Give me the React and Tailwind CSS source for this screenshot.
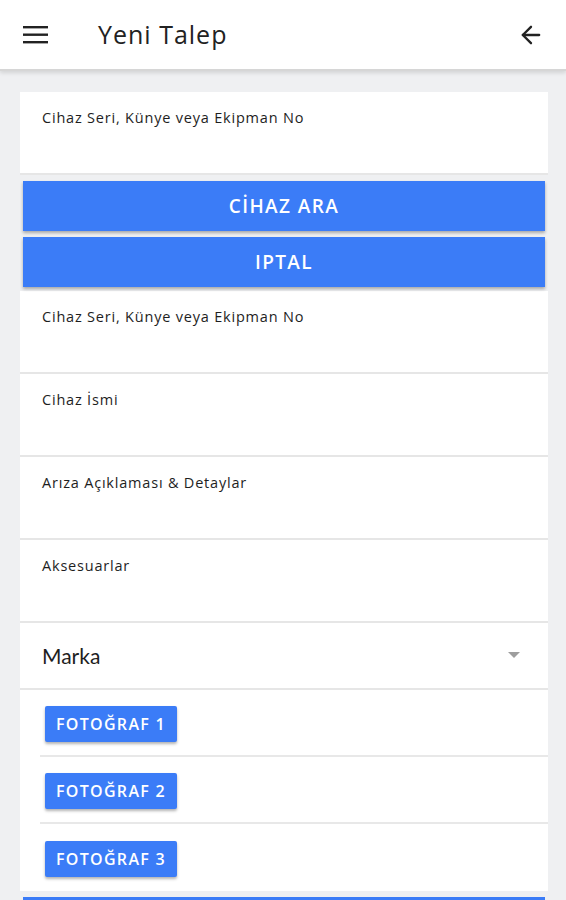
import { ArrowLeft } from 'lucide-react'

const font = { fontFamily: '"Open Sans", "Liberation Sans", sans-serif' }

function Field({ label }) {
  return (
    <div className="h-[83px] bg-white border-b-2 border-[#e6e6e6] pl-[22px] pt-[17px]">
      <div className="text-[14.5px] leading-[18px] text-[#1e1e1e] tracking-[0.8px]">{label}</div>
    </div>
  )
}

function PhotoRow({ n, last }) {
  return (
    <div className={`h-[67px] flex items-center pt-[2px] ${last ? 'pl-[25px]' : 'border-b-2 border-[#e8e8e8] ml-[20px] pl-[5px]'}`}>
      <button className="h-[36px] px-[11px] bg-[#3b7cf7] text-white text-[16px] font-semibold tracking-[1.3px] rounded-[2px] shadow-[0_2px_3px_rgba(0,0,0,0.3)]">
        FOTOĞRAF {n}
      </button>
    </div>
  )
}

export default function App() {
  return (
    <div className="w-[566px] h-[900px] overflow-hidden bg-[#eff0f2]" style={font}>
      <div className="h-[71px] bg-white flex items-center px-[23px] border-b-2 border-[#d6d6d6] shadow-[0_2px_4px_rgba(0,0,0,0.12)] relative z-10">
        <svg width="26" height="20" viewBox="0 0 26 20" className="mr-[49px]">
          <rect x="0" y="1" width="25" height="2.4" fill="#222" />
          <rect x="0" y="8.5" width="25" height="2.4" fill="#222" />
          <rect x="0" y="16" width="25" height="2.4" fill="#222" />
        </svg>
        <div className="text-[25px] text-[#222] flex-1 tracking-[1px]">Yeni Talep</div>
        <ArrowLeft size={28} strokeWidth={2} className="text-[#222] -mr-[2px]" />
      </div>

      <div className="pt-[21px]">
        <div className="ml-[20px] mr-[18px]">
          <Field label="Cihaz Seri, Künye veya Ekipman No" />
        </div>

        <div className="ml-[23px] mr-[21px] mt-[6px] flex flex-col gap-[6px]">
          <button className="h-[50px] bg-[#3b7cf7] text-white text-[19px] font-semibold tracking-[1.4px] shadow-[0_2px_3px_rgba(0,0,0,0.3)]">
            CİHAZ ARA
          </button>
          <button className="h-[50px] bg-[#3b7cf7] text-white text-[19px] font-semibold tracking-[1.4px] shadow-[0_2px_3px_rgba(0,0,0,0.3)]">
            IPTAL
          </button>
        </div>

        <div className="ml-[20px] mr-[18px] mt-[4px] bg-white">
          <Field label="Cihaz Seri, Künye veya Ekipman No" />
          <Field label="Cihaz İsmi" />
          <Field label="Arıza Açıklaması & Detaylar" />
          <Field label="Aksesuarlar" />
          <div className="h-[67px] border-b-2 border-[#e6e6e6] flex items-center pl-[22px] pr-[28px]">
            <div className="flex-1 text-[21px] text-[#1e1e1e]" style={{ fontFamily: 'Lato, "Open Sans", sans-serif' }}>Marka</div>
            <svg width="12" height="7" viewBox="0 0 12 7">
              <path d="M0 0 L12 0 L6 6 Z" fill="#9e9e9e" />
            </svg>
          </div>
          <PhotoRow n={1} />
          <PhotoRow n={2} />
          <PhotoRow n={3} last />
        </div>

        <div className="ml-[23px] mr-[21px] mt-[6px] h-[20px] bg-[#3b7cf7]" />
      </div>
    </div>
  )
}
